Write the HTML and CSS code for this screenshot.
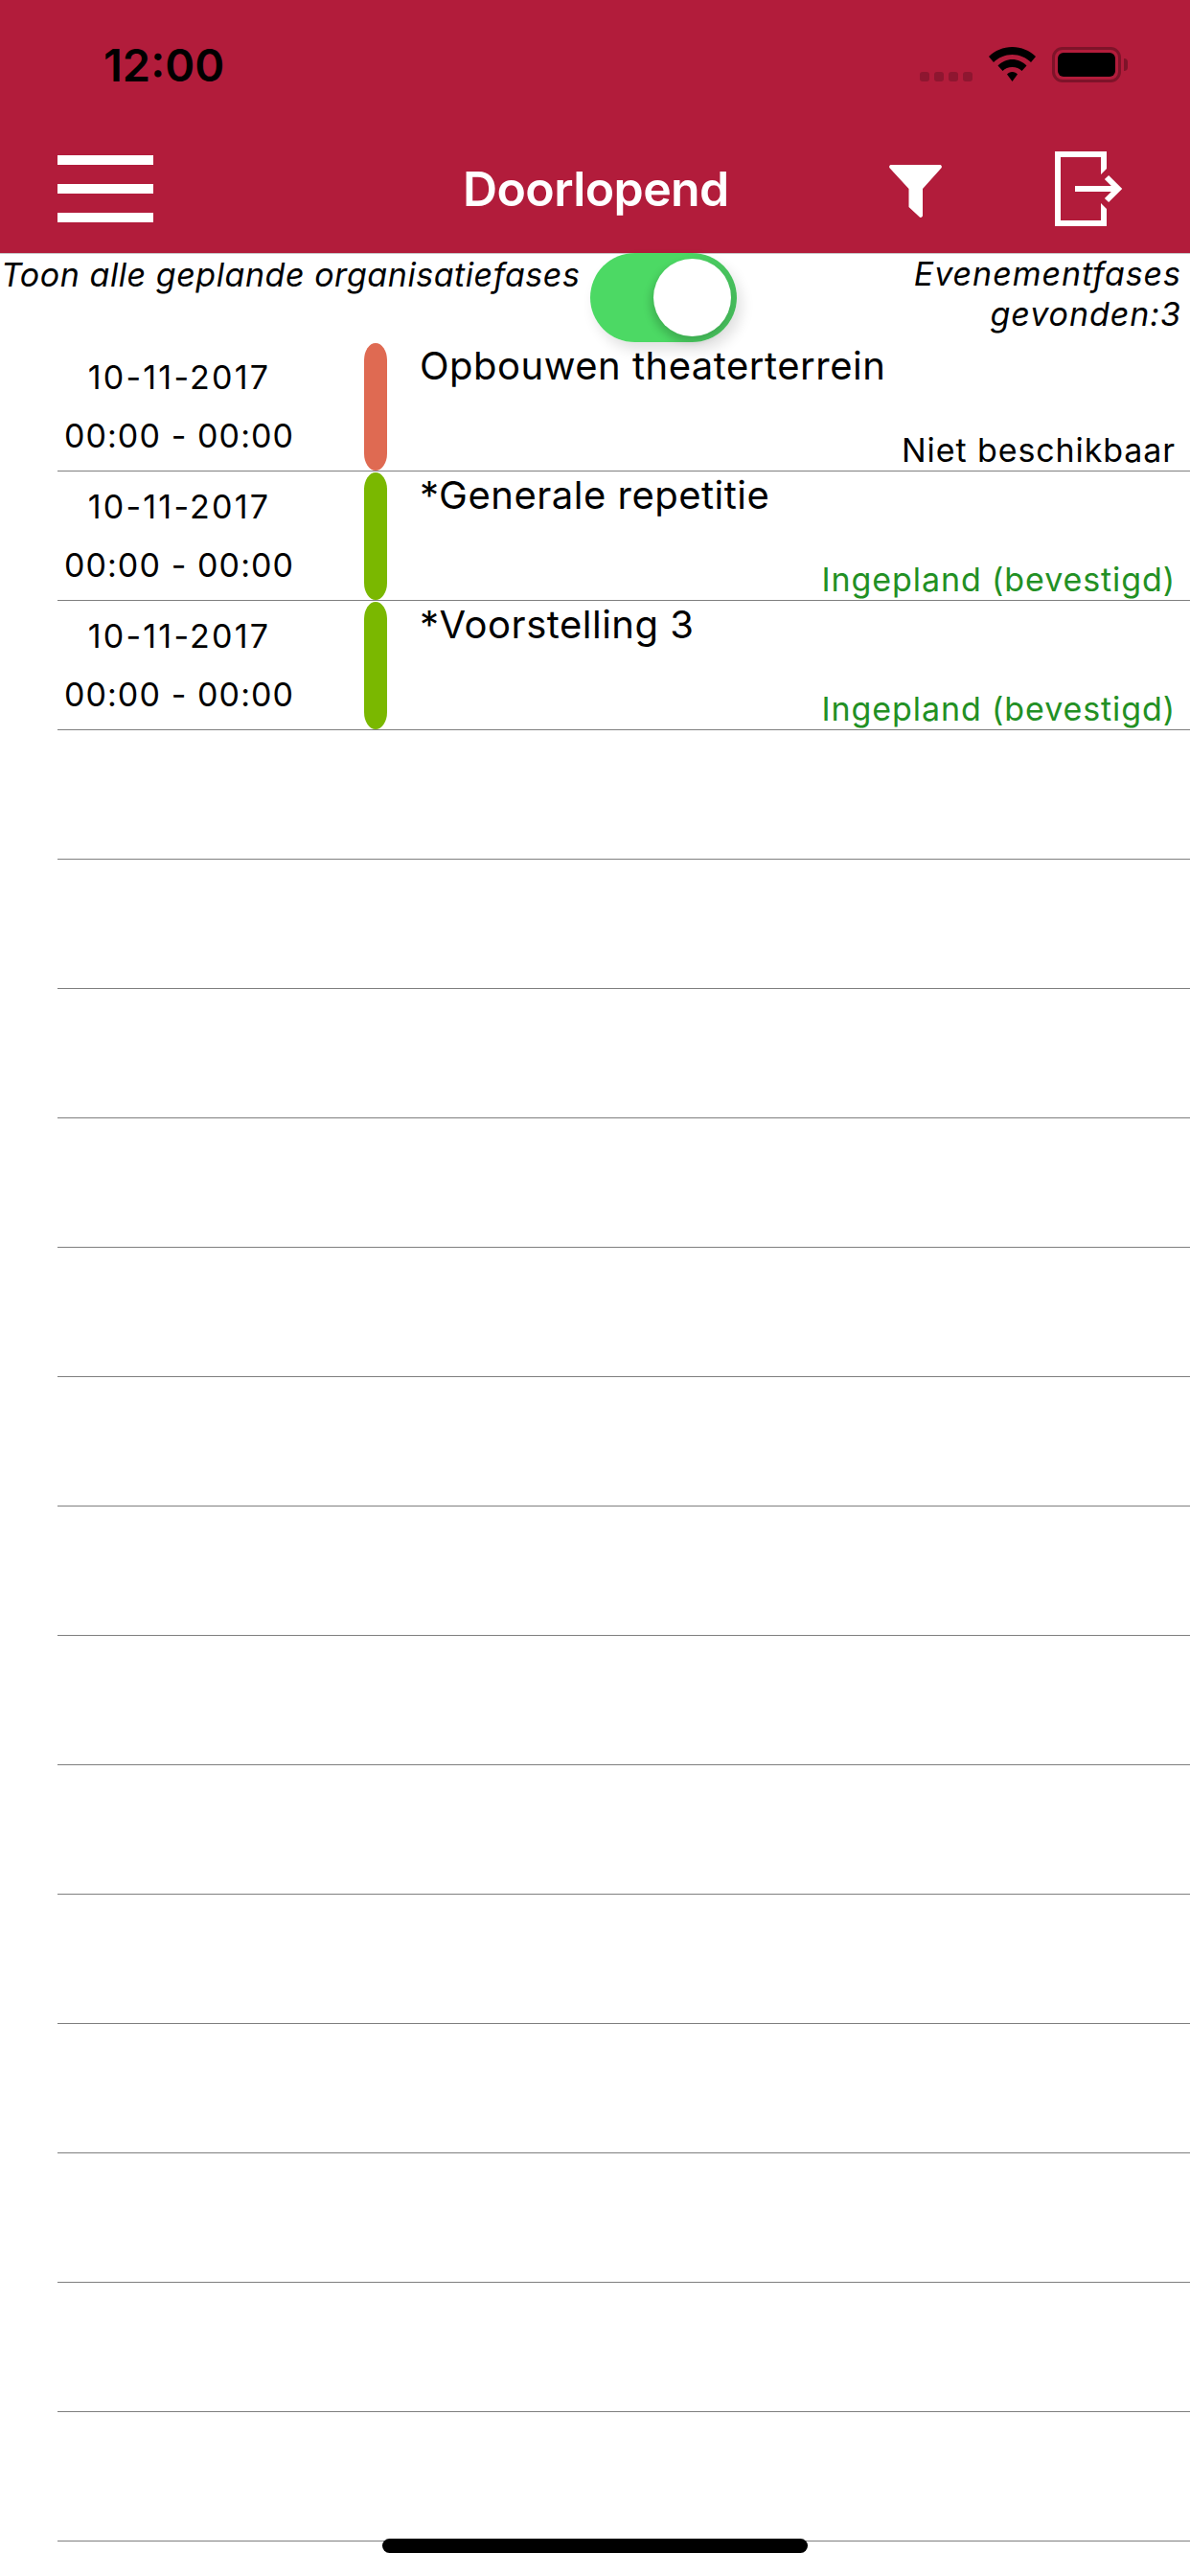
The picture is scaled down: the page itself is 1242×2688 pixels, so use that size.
FILE: index.html
```html
<!doctype html>
<html>
   <head>
      <title>Doorlopend</title>
      <link rel="stylesheet" href="styles.css">
   </head>
   <body>
      <header class="appbar">
         <div class="statusbar">
            <span class="clock">12:00</span>
            <div class="status-icons">
               <div class="signal"><i></i><i></i><i></i><i></i></div>
               <svg class="wifi" viewBox="0 0 49 36" width="49" height="36">
                  <path d="M24.5 0C15 0 6.5 3.8 0 10L5 16C10 11 17 8 24.5 8S39 11 44 16L49 10C42.5 3.8 34 0 24.5 0Z"/>
                  <path d="M24.5 13C19 13 13.5 15.5 9.5 19.5L14.5 25C17 22.5 20.5 21 24.5 21S32 22.5 34.5 25L39.5 19.5C35.5 15.5 30 13 24.5 13Z"/>
                  <path d="M24.5 26C22 26 20.5 27 19 28.5L24.5 36L30 28.5C28.5 27 27 26 24.5 26Z"/>
               </svg>
               <div class="battery"><div class="battery-fill"></div></div>
            </div>
         </div>
         <nav class="navbar">
            <div class="hamburger"><i></i><i></i><i></i></div>
            <h1 class="title">Doorlopend</h1>
            <svg class="filter-icon" viewBox="0 0 55 55" width="55" height="55">
               <path d="M2 0H53a2 2 0 0 1 1.5 3.2L35 25V53a2 2 0 0 1-3.5 1.2L20.5 44V25L.5 3.2A2 2 0 0 1 2 0Z" fill="#fff"/>
            </svg>
            <svg class="exit-icon" viewBox="0 0 72 78" width="72" height="78">
               <path d="M0 0H54V18L48 24V6H6V72H48V54L54 60V78H0Z" fill="#fff"/>
               <path d="M21 39H66" stroke="#fff" stroke-width="6" fill="none"/>
               <path d="M54 27L66 39L54 51" stroke="#fff" stroke-width="6" fill="none"/>
            </svg>
         </nav>
      </header>

      <section class="toolbar">
         <span class="toggle-label">Toon alle geplande organisatiefases</span>
         <div class="toggle"><div class="knob"></div></div>
         <span class="count">Evenementfases<br>gevonden:3</span>
      </section>

      <main class="list">
         <div class="row">
            <div class="when"><span class="date">10-11-2017</span><span class="time">00:00 - 00:00</span></div>
            <div class="pill pill-red"></div>
            <div class="info">
               <span class="name">Opbouwen theaterterrein</span>
               <span class="state">Niet beschikbaar</span>
            </div>
         </div>
         <div class="row">
            <div class="when"><span class="date">10-11-2017</span><span class="time">00:00 - 00:00</span></div>
            <div class="pill pill-green"></div>
            <div class="info">
               <span class="name">*Generale repetitie</span>
               <span class="state state-ok">Ingepland (bevestigd)</span>
            </div>
         </div>
         <div class="row">
            <div class="when"><span class="date">10-11-2017</span><span class="time">00:00 - 00:00</span></div>
            <div class="pill pill-green"></div>
            <div class="info">
               <span class="name">*Voorstelling 3</span>
               <span class="state state-ok">Ingepland (bevestigd)</span>
            </div>
         </div>
         <div class="row"></div>
         <div class="row"></div>
         <div class="row"></div>
         <div class="row"></div>
         <div class="row"></div>
         <div class="row"></div>
         <div class="row"></div>
         <div class="row"></div>
         <div class="row"></div>
         <div class="row"></div>
         <div class="row"></div>
         <div class="row"></div>
         <div class="row"></div>
         <div class="row"></div>
      </main>

      <div class="home-bar"></div>
   </body>
</html>
```

FILE: styles.css
```css
* {
   margin: 0;
   padding: 0;
   box-sizing: border-box;
}

body {
   position: relative;
   width: 1242px;
   height: 2688px;
   overflow: hidden;
   background: #ffffff;
   color: #000000;
   font-family: "Inter", "Liberation Sans", sans-serif;
}

/* Red header */
.appbar {
   height: 265px;
   background: #b21c3b;
   border-bottom: 1px solid #c9c9c9;
}

.statusbar {
   height: 158px;
   padding: 40px 72px 0 108px;
   display: flex;
   justify-content: space-between;
   align-items: flex-start;
}

.clock {
   font-size: 47px;
   font-weight: 600;
   line-height: 56px;
}

.status-icons {
   display: flex;
   align-items: flex-end;
   gap: 17px;
   margin-top: 9px;
}

.signal {
   display: flex;
   gap: 5px;
   margin-bottom: 1px;
}

.signal i {
   width: 10px;
   height: 10px;
   border-radius: 3px;
   background: #8e1630;
}

.wifi {
   margin-bottom: 1px;
}

.battery {
   position: relative;
   width: 72px;
   height: 37px;
   padding: 3px;
   border: 3px solid #7e1329;
   border-radius: 11px;
}

.battery::after {
   content: "";
   position: absolute;
   right: -10px;
   top: 9px;
   width: 4px;
   height: 13px;
   border-radius: 0 4px 4px 0;
   background: #7e1329;
}

.battery-fill {
   height: 100%;
   background: #000000;
   border-radius: 6px;
}

.navbar {
   position: relative;
   height: 106px;
   display: flex;
   align-items: flex-start;
   padding-left: 60px;
}

.hamburger {
   display: flex;
   flex-direction: column;
   gap: 20px;
   margin-top: 4px;
   width: 100px;
}

.hamburger i {
   height: 10px;
   background: #ffffff;
}

.title {
   width: 276px;
   margin: 14px 0 0 323px;
   font-size: 50px;
   font-weight: 600;
   letter-spacing: -0.6px;
   line-height: 50px;
   color: #ffffff;
   white-space: nowrap;
}

.filter-icon {
   margin: 14px 0 0 169px;
}

.exit-icon {
   margin-left: 118px;
}

/* Toggle row */
.toolbar {
   height: 92px;
   display: flex;
   justify-content: space-between;
   align-items: flex-start;
   padding: 0 9px 0 1px;
}

.toggle-label,
.count {
   font-size: 34px;
   font-style: italic;
   line-height: 42px;
   white-space: nowrap;
}

.toggle-label {
   width: 615px;
   margin-top: 1px;
   letter-spacing: 0.55px;
}

.count {
   margin-top: 0;
   margin-left: auto;
   text-align: right;
   letter-spacing: 0.95px;
}

.toggle {
   width: 153px;
   height: 93px;
   margin-top: -1px;
   padding: 6px;
   display: flex;
   justify-content: flex-end;
   border-radius: 47px;
   background: linear-gradient(100deg, #4cd964 55%, #45b85a 100%);
   box-shadow: 5px 8px 14px rgba(0, 0, 0, 0.12);
}

.knob {
   width: 81px;
   height: 81px;
   border-radius: 50%;
   background: #ffffff;
   box-shadow: -3px 5px 8px rgba(0, 0, 0, 0.18);
}

/* List */
.list {
   margin-left: 60px;
}

.row {
   height: 135px;
   display: flex;
   border-bottom: 1px solid #7f7f7f;
}

.when {
   width: 254px;
   display: flex;
   flex-direction: column;
   align-items: center;
   padding-top: 16px;
   gap: 19px;
   font-size: 34px;
   line-height: 42px;
}

.date {
   letter-spacing: 2.2px;
}

.time {
   letter-spacing: 1.1px;
}

.pill {
   width: 24px;
   height: 133px;
   margin: 1px 0 0 66px;
   border-radius: 12px / 18px;
}

.pill-red {
   background: #df6a52;
}

.pill-green {
   background: #7ab800;
}

.info {
   flex: 1;
   padding: 0 15px 0 34px;
   display: flex;
   flex-direction: column;
   justify-content: space-between;
}

.name {
   font-size: 40px;
   line-height: 50px;
   letter-spacing: 0.5px;
}

.state {
   align-self: flex-end;
   font-size: 34px;
   line-height: 42px;
   letter-spacing: 0.9px;
}

.state-ok {
   color: #229024;
}

.home-bar {
   position: absolute;
   left: 399px;
   top: 2649px;
   width: 444px;
   height: 15px;
   border-radius: 8px;
   background: #000000;
}
```
